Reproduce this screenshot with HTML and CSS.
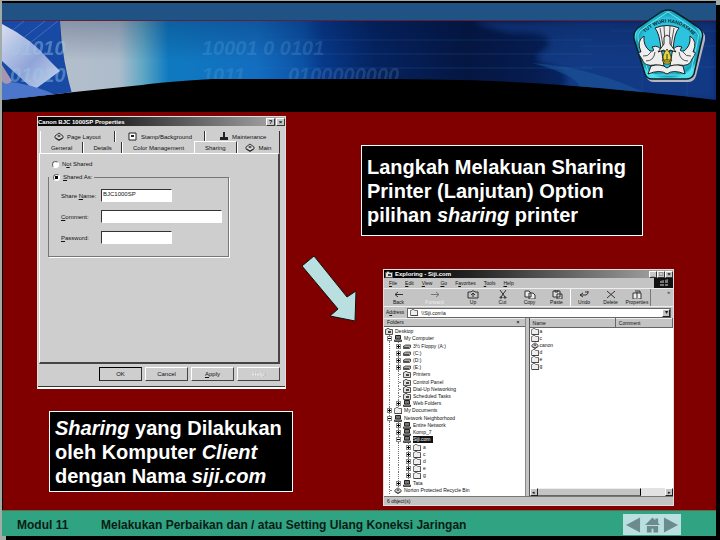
FILE: index.html
```html
<!DOCTYPE html>
<html lang="id">
<head>
<meta charset="utf-8">
<meta name="viewport" content="width=device-width, initial-scale=1">
<title>Modul 11 - Sharing Printer</title>
<link rel="stylesheet" href="styles.css">
</head>
<body>
<svg class="defs" aria-hidden="true">
  <symbol id="folder" viewBox="0 0 8 7"><path d="M.5 6.5v-5h1l.5-1h2l.5 1h3v5z" fill="#eee" stroke="#777"/><path d="M1 6.5h7v-5" fill="none" stroke="#222" stroke-width=".6"/></symbol>
  <symbol id="special" viewBox="0 0 8 7"><path d="M.5 6.5v-5h1l.5-1h2l.5 1h3v5z" fill="#ddd" stroke="#555"/><path d="M3 3h3v2H3z" fill="#444"/></symbol>
  <symbol id="pc" viewBox="0 0 8 7"><path d="M1.5.5h5v3.500h-5z" fill="#777" stroke="#222"/><path d="M.5 5h7v1.500h-7z" fill="#aaa" stroke="#222" stroke-width=".8"/></symbol>
  <symbol id="drive" viewBox="0 0 8 7"><path d="M1 3l1.500-1H7.500v2.500L6.500 5.500H.5V3z" fill="#aaa" stroke="#333" stroke-width=".8"/><path d="M1 4.500h5" stroke="#222" stroke-width=".7"/></symbol>
  <symbol id="printer" viewBox="0 0 10 9"><path d="M1 4l4-3 4 3v2L5 8.500 1 6z" fill="#ddd" stroke="#222" stroke-width=".9"/><path d="M3 4l2-1.500L7 4 5 5.500z" fill="#555"/><path d="M2 6l3 2 3-2" fill="none" stroke="#222"/></symbol>
</svg>

<div class="slide">
  <header class="banner">
    <svg class="banner-art" viewBox="0 0 714 111" preserveAspectRatio="xMidYMid slice" aria-hidden="true">
      <defs>
        <linearGradient id="photo" gradientUnits="userSpaceOnUse" x1="58" y1="0" x2="714" y2="0">
          <stop offset="0" stop-color="#b5bfcc"/><stop offset=".09" stop-color="#adbccb"/><stop offset=".125" stop-color="#62a8c4"/>
          <stop offset=".165" stop-color="#0f7ac0"/><stop offset=".3" stop-color="#136dc0"/><stop offset=".37" stop-color="#0c52a5"/>
          <stop offset=".4" stop-color="#07398a"/><stop offset=".48" stop-color="#052360"/><stop offset=".62" stop-color="#051641"/>
          <stop offset=".72" stop-color="#061c50"/><stop offset=".8" stop-color="#08296b"/><stop offset="1" stop-color="#08256a"/>
        </linearGradient>
        <linearGradient id="hand" x1="0" y1="0" x2="1" y2="1"><stop offset="0" stop-color="#d9dff0"/><stop offset=".55" stop-color="#8fa4d8"/><stop offset="1" stop-color="#cfd8ee"/></linearGradient>
        <linearGradient id="shade" x1="0" y1="0" x2="0" y2="1"><stop offset="0" stop-color="#02123c" stop-opacity=".25"/><stop offset=".5" stop-color="#02123c" stop-opacity="0"/></linearGradient>
        <clipPath id="arc"><path d="M0 20H714V99Q650 91 560 84Q500 79 400 78H210Q160 81 140 84Q70 91 0 99z"/></clipPath>
        <filter id="soft"><feGaussianBlur stdDeviation="3"/></filter>
      </defs>
      <rect width="714" height="111" fill="#000"/>
      <rect y="2" width="714" height="17" fill="#205383"/>
      <rect y="19" width="714" height="1" fill="#60203c"/>
      <g clip-path="url(#arc)">
        <rect y="20" width="714" height="80" fill="url(#photo)"/>
        <path d="M470 20h244v80H540Q580 80 554 66Q522 60 544 48Q558 30 510 32Q490 29 470 20z" fill="#123f8c" filter="url(#soft)" opacity=".75"/>
        <path d="M530 62Q590 66 650 95H575Q590 78 530 62z" fill="#2464a8" opacity=".4"/>
        <path d="M0 20H58Q60 60 72 100H0z" fill="#1749a5"/>
        <path d="M20 38L43 20M28 42L56 20M7 32L22 20" stroke="#6b91d2" opacity=".5"/>
        <path d="M0 23Q30 38 48 60L58 70 32 89 0 60z" fill="url(#hand)"/>
        <path d="M0 80Q30 82 58 96L0 102z" fill="#4b76cc"/>
        <path d="M0 64L10 80Q4 86 0 80z" fill="#a795b4"/>
        <path d="M580 45h134M580 66h134M640 20v75M685 20v75M608 30h106" stroke="#2b5bac" opacity=".35"/>
        <path d="M250 39h340M250 53h340M250 67h340" stroke="#2d70b8" opacity=".25"/>
        <rect x="58" y="20" width="656" height="80" fill="url(#shade)"/>
        <g class="digits"><text x="8" y="54">01010</text><text x="8" y="81">01010</text><text x="200" y="54" opacity=".4">10001 0 0101</text><text x="200" y="81" opacity=".35">1011</text><text x="286" y="81" opacity=".4">0100000000</text></g>
      </g>
    </svg>
    <svg class="logo" viewBox="0 0 76 76" role="img" aria-label="Tut Wuri Handayani">
      <defs><radialGradient id="gem"><stop offset=".75" stop-color="#2cc3df"/><stop offset=".92" stop-color="#159eb8"/><stop offset="1" stop-color="#4be2ed"/></radialGradient></defs>
      <path d="M31 4Q37 0 43 4Q57 13 69 21Q74 25 73 31L64 67Q62 73 56 73H22Q16 73 14 67L4 31Q2 24 8 21Q19 13 31 4z" fill="#b8b6c0" transform="translate(1 1)"/>
      <path d="M30 4Q37 0 44 4Q57 12 68 20Q73 24 71 31L63 66Q61 71 55 71H21Q16 71 14 66L3 31Q2 24 7 20Q18 12 30 4z" fill="url(#gem)" stroke="#06202b" stroke-width="1.500"/>
      <path d="M37 4Q50 12 65 23Q69 27 67 31L60 63Q58 67 54 67H22Q19 67 17 63L7 31Q6 27 9 23Q24 12 37 4" fill="none" stroke="#6be5ee" stroke-width="1"/>
      <path id="motto" d="M9 30Q37 -2 67 32" fill="none"/>
      <text class="motto"><textPath href="#motto" startOffset="50%">TUT WURI HANDAYANI</textPath></text>
      <g fill="#eee" stroke="#111" stroke-width=".9" stroke-linejoin="round">
        <path d="M24 20Q36 15 48 20Q43 25 42 43H30Q29 26 24 20z"/>
        <path d="M29 20l3 18M33 18l1 18M39 18l-1 18M43 20l-3 18" fill="none" stroke-width=".7"/>
        <path d="M13 28Q5 33 10 44Q5 43 11 51Q13 59 24 57L33 58 31 45Q29 36 21 39Q25 44 19 43Q12 38 13 28z"/>
        <path d="M59 28Q67 33 62 44Q67 43 61 51Q59 59 48 57L39 58 41 45Q43 36 51 39Q47 44 53 43Q60 38 59 28z"/>
        <path d="M12 48Q17 49 20 44M15 53Q23 53 24 44M60 48Q55 49 52 44M57 53Q49 53 48 44" fill="none" stroke-width=".7"/>
        <path d="M33 29l3-2 3 2v7l6 8-6-2-3 5-3-5-6 2 6-8z"/>
        <path d="M20 58Q30 55 36 60Q42 55 52 58L54 66Q42 61 36 66Q29 61 17 66z"/>
      </g>
      <path d="M36 41Q43 50 38 54H34Q29 49 36 41zM31 52h10l-3 4h-4z" fill="#ead43b" stroke="#37300b" stroke-width=".8"/>
      <path d="M36 46v6" stroke="#333"/>
    </svg>
  </header>

  <main class="content">
    <section class="col-left">
      <form class="dialog win">
        <div class="titlebar"><span class="title">Canon BJC 1000SP Properties</span><button type="button" class="cap" aria-label="Help">?</button><button type="button" class="cap" aria-label="Close">×</button></div>
        <div class="tabs tabs-back">
          <button type="button" class="tab"><svg class="ico"><use href="#printer"/></svg>Page Layout</button>
          <button type="button" class="tab"><svg class="ico" viewBox="0 0 10 9"><path d="M1 1h7v7H1z" fill="#fff" stroke="#222"/><path d="M3 3h3v2H3z" fill="#222"/></svg>Stamp/Background</button>
          <button type="button" class="tab"><svg class="ico" viewBox="0 0 10 9"><path d="M1 5h8v3H1zM4 0h2v5H4z" fill="#222"/></svg>Maintenance</button>
        </div>
        <div class="tabs tabs-front">
          <button type="button" class="tab">General</button>
          <button type="button" class="tab">Details</button>
          <button type="button" class="tab">Color Management</button>
          <button type="button" class="tab active">Sharing</button>
          <button type="button" class="tab"><svg class="ico"><use href="#printer"/></svg>Main</button>
        </div>
        <div class="panel">
          <label class="choice"><input type="radio" name="share"><span>N<u>o</u>t Shared</span></label>
          <fieldset class="group">
            <legend><label class="choice"><input type="radio" name="share" checked><span><u>S</u>hared As:</span></label></legend>
            <div class="field"><label for="share-name">Share <u>N</u>ame:</label><input id="share-name" type="text" value="BJC1000SP"></div>
            <div class="field wide"><label for="comment"><u>C</u>omment:</label><input id="comment" type="text"></div>
            <div class="field"><label for="password"><u>P</u>assword:</label><input id="password" type="text"></div>
          </fieldset>
        </div>
        <div class="actions">
          <button type="button" class="btn default">OK</button><button type="button" class="btn">Cancel</button><button type="button" class="btn"><u>A</u>pply</button><button type="button" class="btn" disabled>Help</button>
        </div>
      </form>
      <p class="note note-left"><em>Sharing</em> yang Dilakukan<br>oleh Komputer <em>Client</em><br>dengan Nama <em>siji.com</em></p>
    </section>

    <div class="pointer">
      <svg viewBox="0 0 56 68" aria-hidden="true"><path d="M1 11L13 1 46 42 55 36 54 66 29 61 37 54z" fill="#b9dfe0" stroke="#111"/></svg>
    </div>

    <section class="col-right">
      <p class="note note-right">Langkah Melakuan Sharing<br>Printer (Lanjutan) Option<br>pilihan <em>sharing</em> printer</p>
      <div class="explorer win">
        <div class="titlebar"><svg class="tico"><use href="#special"/></svg><span class="title">Exploring - Siji.com</span><button type="button" class="cap" aria-label="Minimize">_</button><button type="button" class="cap" aria-label="Maximize">□</button><button type="button" class="cap" aria-label="Close">×</button></div>
        <div class="menubar"><nav class="menus"><a href="#"><u>F</u>ile</a><a href="#"><u>E</u>dit</a><a href="#"><u>V</u>iew</a><a href="#"><u>G</u>o</a><a href="#">F<u>a</u>vorites</a><a href="#"><u>T</u>ools</a><a href="#"><u>H</u>elp</a></nav>
          <svg class="throbber" viewBox="0 0 19 10" aria-hidden="true"><path fill="#111" d="M0 0h19v10H0z"/><path d="M6 3l4-1v3H6zM11 2l3-1v4h-3zM6 6h4v2H6zM11 6h3v2h-3z" fill="#777"/></svg></div>
        <div class="toolbar">
          <button type="button" class="tool arrowed"><svg viewBox="0 0 12 9"><path d="M10 4.500H2M5 2L2 4.500 5 7"/></svg>Back</button>
          <button type="button" class="tool arrowed off"><svg viewBox="0 0 12 9"><path d="M2 4.500h8M7 2l3 2.500L7 7"/></svg>Forward</button>
          <button type="button" class="tool mid"><svg viewBox="0 0 12 9"><path d="M1 8V2h3l1-1h2l1 1h3v6zM6 7V4M4 5l2-2 2 2"/></svg>Up</button>
          <button type="button" class="tool"><svg viewBox="0 0 12 9"><path d="M3 0l5 7M9 0L4 7M3 7h2v1H3zM7 7h2v1H7z"/></svg>Cut</button>
          <button type="button" class="tool"><svg viewBox="0 0 12 9"><path d="M1 1h4l2 2v4H1zM5 3h4l2 2v4H5z" fill="#eee"/></svg>Copy</button>
          <button type="button" class="tool"><svg viewBox="0 0 12 9"><path d="M2 1h7v6H2zM4 0h3v2H4zM6 4h5v5H6z" fill="#ddd"/></svg>Paste</button>
          <button type="button" class="tool split"><svg viewBox="0 0 12 9"><path d="M5 3L2 5l3 2M2 5h6q3-1 2-4M7 2h3"/></svg>Undo</button>
          <button type="button" class="tool"><svg viewBox="0 0 12 9"><path d="M2 1l8 7M10 1L2 8"/></svg>Delete</button>
          <button type="button" class="tool last"><svg viewBox="0 0 12 9"><path d="M2 3h8v6H2z" fill="#eee"/><path d="M6 8V2M4 1h5v2"/></svg>Properties</button>
          <span class="more">»</span>
        </div>
        <div class="address"><label for="addr">A<u>d</u>dress</label><div class="combo"><svg class="icon"><use href="#folder"/></svg><input id="addr" type="text" value="\\Siji.com\a"><button type="button" class="drop" aria-label="Open list">▾</button></div></div>
        <div class="panes">
          <div class="pane-left">
            <div class="pane-head"><span>Folders</span><span class="x">×</span></div>
            <ul class="tree">
              <li class="l0"><svg class="icon"><use href="#special"/></svg>Desktop</li>
              <li class="l1"><i class="ex minus"></i><svg class="icon"><use href="#pc"/></svg>My Computer</li>
              <li class="l2"><i class="ex plus"></i><svg class="icon"><use href="#drive"/></svg>3½ Floppy (A:)</li>
              <li class="l2"><i class="ex plus"></i><svg class="icon"><use href="#drive"/></svg>(C:)</li>
              <li class="l2"><i class="ex plus"></i><svg class="icon"><use href="#drive"/></svg>(D:)</li>
              <li class="l2"><i class="ex plus"></i><svg class="icon"><use href="#drive"/></svg>(E:)</li>
              <li class="l2"><i class="ex"></i><svg class="icon"><use href="#special"/></svg>Printers</li>
              <li class="l2"><i class="ex"></i><svg class="icon"><use href="#special"/></svg>Control Panel</li>
              <li class="l2"><i class="ex"></i><svg class="icon"><use href="#special"/></svg>Dial-Up Networking</li>
              <li class="l2"><i class="ex"></i><svg class="icon"><use href="#special"/></svg>Scheduled Tasks</li>
              <li class="l2"><i class="ex plus"></i><svg class="icon"><use href="#pc"/></svg>Web Folders</li>
              <li class="l1"><i class="ex plus"></i><svg class="icon"><use href="#folder"/></svg>My Documents</li>
              <li class="l1"><i class="ex minus"></i><svg class="icon"><use href="#pc"/></svg>Network Neighborhood</li>
              <li class="l2"><i class="ex plus"></i><svg class="icon"><use href="#pc"/></svg>Entire Network</li>
              <li class="l2"><i class="ex plus"></i><svg class="icon"><use href="#pc"/></svg>Komp_7</li>
              <li class="l2"><i class="ex minus"></i><svg class="icon"><use href="#pc"/></svg><b class="sel">Siji.com</b></li>
              <li class="l3"><i class="ex plus"></i><svg class="icon"><use href="#folder"/></svg>a</li>
              <li class="l3"><i class="ex plus"></i><svg class="icon"><use href="#folder"/></svg>c</li>
              <li class="l3"><i class="ex plus"></i><svg class="icon"><use href="#folder"/></svg>d</li>
              <li class="l3"><i class="ex plus"></i><svg class="icon"><use href="#folder"/></svg>e</li>
              <li class="l3"><i class="ex plus"></i><svg class="icon"><use href="#folder"/></svg>g</li>
              <li class="l2"><i class="ex plus"></i><svg class="icon"><use href="#pc"/></svg>Tata</li>
              <li class="l1"><i class="ex"></i><svg class="icon"><use href="#printer"/></svg>Norton Protected Recycle Bin</li>
            </ul>
          </div>
          <div class="pane-right">
            <table class="files">
              <thead><tr><th>Name</th><th>Comment</th></tr></thead>
              <tbody>
                <tr><td><svg class="icon"><use href="#folder"/></svg>a</td><td></td></tr>
                <tr><td><svg class="icon"><use href="#folder"/></svg>c</td><td></td></tr>
                <tr><td><svg class="icon"><use href="#printer"/></svg>canon</td><td></td></tr>
                <tr><td><svg class="icon"><use href="#folder"/></svg>d</td><td></td></tr>
                <tr><td><svg class="icon"><use href="#folder"/></svg>e</td><td></td></tr>
                <tr><td><svg class="icon"><use href="#folder"/></svg>g</td><td></td></tr>
              </tbody>
            </table>
            <div class="scroll"><button type="button" aria-label="Scroll left">◂</button><span class="thumb"></span><span class="track"></span><button type="button" aria-label="Scroll right">▸</button></div>
          </div>
        </div>
        <div class="status">6 object(s)</div>
      </div>
    </section>
  </main>

  <footer class="footer">
    <span class="module">Modul 11</span>
    <span class="course">Melakukan Perbaikan dan / atau Setting Ulang Koneksi Jaringan</span>
    <nav class="pager">
      <a href="#" aria-label="Previous"><svg viewBox="0 0 16 16"><path d="M15 0v16L0 8z"/></svg></a>
      <a href="#" aria-label="Home"><svg viewBox="0 0 16 16"><path d="M8 0l8 8H0zM11 1h3v5h-3zM2 9h12v7H9v-4H7v4H2z"/></svg></a>
      <a href="#" aria-label="Next"><svg viewBox="0 0 16 16"><path d="M1 0v16L16 8z"/></svg></a>
    </nav>
  </footer>
</div>
</body>
</html>
```

FILE: styles.css
```css
* { box-sizing: border-box; }

body {
  margin: 0;
  min-height: 100vh;
  display: flex;
  background: #a3aba6;
  font-family: "Liberation Sans", Arial, sans-serif;
  overflow-x: hidden;
}

.defs { position: absolute; width: 0; height: 0; }

button, input { font: inherit; color: inherit; margin: 0; padding: 0; border: 0; border-radius: 0; }
a { color: inherit; text-decoration: none; }

.slide {
  flex: 1;
  min-width: 0;
  margin: 1px 4px 4px 2px;
  display: flex;
  flex-direction: column;
  background: #800000;
  box-shadow: 4px 4px 0 #000;
}

/* Banner */
.banner { position: relative; height: 111px; }
.banner-art { display: block; width: 100%; height: 111px; }
.logo { position: absolute; top: 7px; right: 9px; width: 76px; height: 76px; }
.digits { font: italic bold 20px "Liberation Sans", sans-serif; fill: #9fd0e8; opacity: .4; }
.motto { font: bold 5px "Liberation Sans", sans-serif; fill: #08242c; text-anchor: middle; }

/* Body */
.content {
  flex: 1;
  display: grid;
  grid-template-columns: 256fr 60fr 313fr;
  column-gap: 4px;
  padding: 4px 42px 4px 34px;
  border-left: 1px solid #000;
}
.col-left, .col-right { min-width: 0; }
.col-right { padding-top: 29px; }
.pointer { padding: 139px 0 0 4px; }
.pointer svg { display: block; width: 100%; }

.note {
  margin: 0;
  border: 1px solid #fff;
  background: #000;
  color: #fff;
  font-size: 20px;
  font-weight: bold;
  line-height: 24px;
  white-space: nowrap;
}
.note-left { margin: 22px 0 0 12px; padding: 4px 5px 3px; }
.note-right { margin-right: 31px; padding: 9px 5px 8px; }

/* Classic windows */
.win { background: #c8c8c8; color: #111; border: 1px solid #ddd; }
.titlebar {
  display: flex;
  align-items: center;
  height: 9px;
  background: linear-gradient(90deg, #000, #222 30%, #aaa);
  color: #fff;
  font-weight: bold;
}
.title { flex: 1; }
.cap {
  width: 9px;
  height: 8px;
  background: #c8c8c8;
  border: 1px solid;
  border-color: #fff #333 #333 #fff;
  color: #000;
  line-height: 6px;
  margin-left: 1px;
}

.dialog {
  margin-right: 7px;
  height: 273px;
  display: flex;
  flex-direction: column;
  font-size: 6px;
  line-height: 8px;
  background: #cecece;
  border-bottom: 2px solid #fff;
}
.tabs { display: flex; margin: 0 5px 0 2px; }
.tabs-back { margin-top: 5px; }
.tab {
  display: flex;
  align-items: center;
  justify-content: center;
  gap: 3px;
  height: 11px;
  background: #cecece;
  border-left: 1px solid #fff;
  border-right: 1px solid #333;
  white-space: nowrap;
}
.tabs-back .tab { flex: 75; }
.tabs-back .tab:nth-child(2) { flex: 92; }
.tabs-front .tab { flex: 42; }
.tabs-front .tab:nth-child(2) { flex: 38; }
.tabs-front .tab:nth-child(3) { flex: 72; border-right: 0; }
.tabs-front .active { border-top: 1px solid #fff; margin-top: -1px; height: 13px; margin-bottom: -1px; }
.ico { width: 10px; height: 9px; }
.panel {
  flex: 1;
  margin: 0 5px 0 1px;
  padding: 6px 49px 0 8px;
  border: 1px solid #fff;
  border-right: 2px solid #444;
  border-bottom: 2px solid #444;
}
.choice { display: flex; align-items: center; gap: 3px; margin-left: 4px; }
.choice input {
  appearance: none;
  width: 7px;
  height: 7px;
  border: 1px solid #666;
  border-right-color: #fff;
  border-bottom-color: #fff;
  border-radius: 50%;
  background: #fff;
}
.choice input:checked { background: radial-gradient(circle, #000 40%, #fff 50%); }
.group { margin: 5px 0 0; padding: 8px 6px 9px 12px; border: 1px solid #777; box-shadow: 1px 1px 0 #fff; min-width: 0; height: 84px; }
.group legend { padding: 0 2px 0 0; margin-left: -12px; }
.field { display: flex; align-items: center; margin-bottom: 8px; }
.field label { width: 40px; }
.field input {
  width: 71px;
  height: 13px;
  padding: 0 1px 3px;
  background: #fff;
  border: 1px solid;
  border-color: #333 #fff #fff #333;
}
.field.wide input { width: 122px; }
.actions { display: flex; justify-content: flex-end; gap: 3px; padding: 3px 5px 5px; border-bottom: 1px solid #333; }
.btn {
  width: 43px;
  height: 14px;
  background: #cecece;
  border: 1px solid;
  border-color: #fff #444 #444 #fff;
}
.btn.default { border-color: #000 #333 #333 #000; }
.btn:disabled { color: #fff; text-shadow: 1px 0 0 #999; }

.explorer {
  margin: 33px 0 0 22px;
  height: 237px;
  display: flex;
  flex-direction: column;
  background: #c4c4c4;
  font-size: 5px;
  line-height: 7px;
}
.explorer .titlebar { height: 8px; font-size: 6px; }
.explorer .cap { width: 8px; height: 7px; line-height: 5px; margin-left: 0; }
.tico { width: 8px; height: 7px; margin: 0 2px 0 1px; }
.menubar { display: flex; height: 10px; justify-content: space-between; align-items: center; }
.menus { display: flex; gap: 8px; padding-left: 5px; }
.throbber { width: 19px; height: 10px; }
.toolbar { display: flex; align-items: stretch; height: 18px; border-top: 1px solid #eee; padding-left: 1px; }
.tool {
  width: 27px;
  display: flex;
  flex-direction: column;
  align-items: center;
  background: none;
  line-height: 6px;
}
.tool svg { width: 12px; height: 9px; fill: none; stroke: #333; margin-top: 1px; }
.tool.arrowed { width: 36px; padding-right: 9px; }
.tool.off { color: #eee; }
.tool.off svg { stroke: #777; }
.tool.mid { width: 32px; }
.tool.split { border-left: 1px solid #fff; }
.tool.last { border-right: 1px solid #777; }
.more { margin-left: auto; padding-right: 3px; }
.address { display: flex; align-items: center; height: 12px; padding: 0 2px; gap: 3px; border-top: 1px solid #eee; }
.combo { flex: 1; display: flex; align-items: center; height: 10px; background: #fff; border: 1px solid #666; padding-left: 2px; gap: 3px; }
.combo input { flex: 1; min-width: 0; height: 8px; background: none; }
.drop { width: 8px; height: 8px; background: #c4c4c4; border: 1px solid; border-color: #fff #222 #222 #fff; font-size: 6px; line-height: 5px; }
.icon { flex: none; width: 8px; height: 7px; }

.panes { flex: 1; display: flex; gap: 3px; min-height: 0; }
.pane-left { flex: 142; display: flex; flex-direction: column; background: #fff; border-right: 1px solid #888; min-width: 0; }
.pane-head { display: flex; justify-content: space-between; height: 9px; padding: 0 5px 0 3px; background: #c4c4c4; border-bottom: 1px solid #666; border-top: 1px solid #eee; }
.x { font-weight: bold; }
.tree {
  list-style: none;
  margin: 1px 0 2px;
  padding: 0;
  flex: 1;
  display: grid;
  grid-auto-rows: 1fr;
}
.tree li { display: flex; align-items: center; gap: 2px; min-height: 0; white-space: nowrap; --dots: repeating-linear-gradient(#777 0 1px, #fff 1px 2px); }
.tree .l0 { padding-left: 1px; }
.tree .l1 { padding-left: 3px; background: var(--dots) 5px 0 / 1px 100% no-repeat; }
.tree .l2 { padding-left: 12px; background: var(--dots) 5px 0 / 1px 100% no-repeat, var(--dots) 14px 0 / 1px 100% no-repeat; }
.tree .l3 { padding-left: 22px; background: var(--dots) 5px 0 / 1px 100% no-repeat, var(--dots) 14px 0 / 1px 100% no-repeat, var(--dots) 24px 0 / 1px 100% no-repeat; }
.ex { width: 5px; height: 5px; background: linear-gradient(#888, #888) 3px 2px / 2px 1px no-repeat; }
.ex.minus, .ex.plus { border: 1px solid #888; background: linear-gradient(#000, #000) center / 3px 1px no-repeat, #fff; }
.ex.plus { background: linear-gradient(#000, #000) center / 3px 1px no-repeat, linear-gradient(#000, #000) center / 1px 3px no-repeat, #fff; }
.sel { background: #111; color: #fff; font-weight: normal; padding-right: 2px; }

.pane-right { flex: 145; display: flex; flex-direction: column; justify-content: space-between; background: #fff; border-left: 1px solid #555; min-width: 0; }
.files { width: 100%; border-collapse: collapse; table-layout: fixed; }
.files th {
  height: 9px;
  padding: 0 3px;
  background: #c4c4c4;
  border-right: 1px solid #666;
  border-bottom: 1px solid #666;
  border-top: 1px solid #eee;
  font-weight: normal;
  text-align: left;
}
.files th:first-child { width: 60%; }
.files td { padding: 0; height: 7px; line-height: 7px; }
.files td .icon { vertical-align: top; margin: 0 1px; }
.scroll { display: flex; height: 8px; background: #c4c4c4; }
.scroll button { width: 8px; background: #c4c4c4; border: 1px solid; border-color: #fff #222 #222 #fff; line-height: 5px; }
.thumb { flex: 105; border-top: 1px solid #eee; border-right: 1px solid #000; border-bottom: 1px solid #666; }
.track { flex: 24; background: #e2e2e2; }
.status { height: 9px; padding: 1px 3px 0; border-top: 1px solid #777; }

/* Footer */
.footer {
  display: flex;
  align-items: center;
  height: 26px;
  padding: 2px 35px 0 15px;
  background: #30a382;
  border-top: 1px solid #5d6b4d;
  color: #0a1c14;
  font-size: 12px;
  font-weight: bold;
  white-space: nowrap;
}
.module { width: 84px; }
.pager { display: flex; align-items: center; justify-content: space-between; margin-left: auto; width: 58px; height: 21px; padding: 0 3px; background: #b9dfe0; }
.pager a { display: flex; }
.pager svg { width: 15px; height: 16px; fill: #6c8b8c; }
```
